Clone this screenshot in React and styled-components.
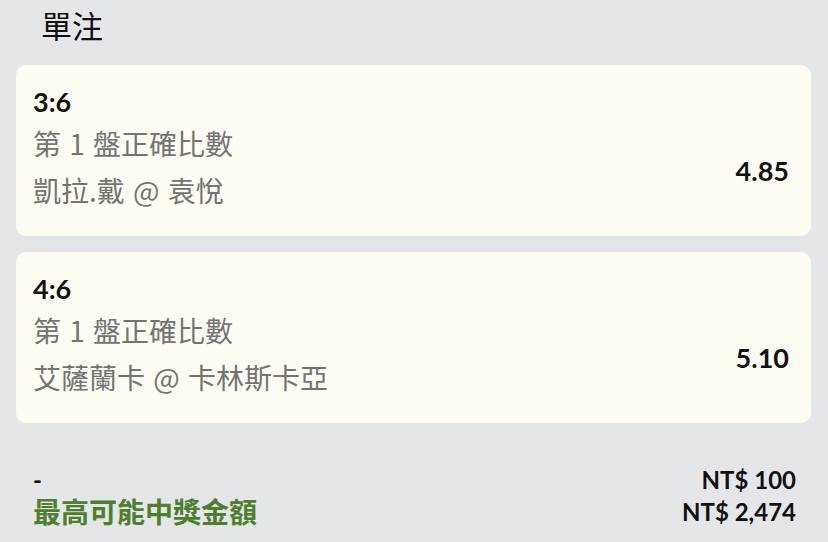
import React from "react";
import styled, { createGlobalStyle } from "styled-components";

const Global = createGlobalStyle`
  html, body { margin: 0; padding: 0; background: #e5e6e8; }
  body { font-family: Lato, "Noto Sans CJK TC", sans-serif; color: #111; }
`;

const Page = styled.div`
  width: 828px;
  min-height: 542px;
  background: #e5e6e8;
  display: flex;
  flex-direction: column;
`;

const Title = styled.h1`
  margin: 0;
  padding: 5px 0 0 41px;
  font-family: "Noto Sans CJK TC", sans-serif;
  font-weight: 400;
  font-size: 31px;
  line-height: 40px;
  color: #111;
`;

const List = styled.div`
  display: flex;
  flex-direction: column;
  gap: 16px;
  padding: 20px 17px 0 16px;
`;

const Card = styled.div`
  background: #fdfdf3;
  border-radius: 10px;
  padding: 22px 22px 22px 17px;
  display: flex;
  align-items: center;
  justify-content: space-between;
`;

const Info = styled.div`
  display: flex;
  flex-direction: column;
`;

const Score = styled.div`
  font-family: Lato, sans-serif;
  font-weight: 700;
  font-size: 27px;
  line-height: 30px;
  color: #111;
`;

const Sub = styled.div`
  font-family: "Noto Sans CJK TC", sans-serif;
  font-size: 28px;
  line-height: 47px;
  word-spacing: 2px;
  color: #747474;
  margin-top: ${(p) => (p.$first ? "3px" : "0")};
`;

const Odds = styled.div`
  font-family: Lato, sans-serif;
  font-weight: 700;
  font-size: 27px;
  color: #111;
  margin-top: 40px;
`;

const Summary = styled.div`
  display: flex;
  flex-direction: column;
  padding: 40px 32px 0 33px;
`;

const Row = styled.div`
  display: flex;
  justify-content: space-between;
  align-items: center;
  height: 32px;
`;

const Label = styled.div`
  font-family: Lato, "Noto Sans CJK TC", sans-serif;
  font-weight: 700;
  font-size: ${(p) => (p.$green ? "28px" : "24px")};
  color: ${(p) => (p.$green ? "#4d7f2f" : "#111")};
`;

const Amount = styled.div`
  font-family: Lato, sans-serif;
  font-weight: 700;
  font-size: 24px;
  color: #111;
`;

const bets = [
  { score: "3:6", market: "第 1 盤正確比數", match: "凱拉.戴 @ 袁悅", odds: "4.85" },
  { score: "4:6", market: "第 1 盤正確比數", match: "艾薩蘭卡 @ 卡林斯卡亞", odds: "5.10" },
];

export default function App() {
  return (
    <Page>
      <Global />
      <Title>單注</Title>
      <List>
        {bets.map((b) => (
          <Card key={b.score}>
            <Info>
              <Score>{b.score}</Score>
              <Sub $first>{b.market}</Sub>
              <Sub>{b.match}</Sub>
            </Info>
            <Odds>{b.odds}</Odds>
          </Card>
        ))}
      </List>
      <Summary>
        <Row>
          <Label>-</Label>
          <Amount>NT$ 100</Amount>
        </Row>
        <Row>
          <Label $green>最高可能中獎金額</Label>
          <Amount>NT$ 2,474</Amount>
        </Row>
      </Summary>
    </Page>
  );
}
